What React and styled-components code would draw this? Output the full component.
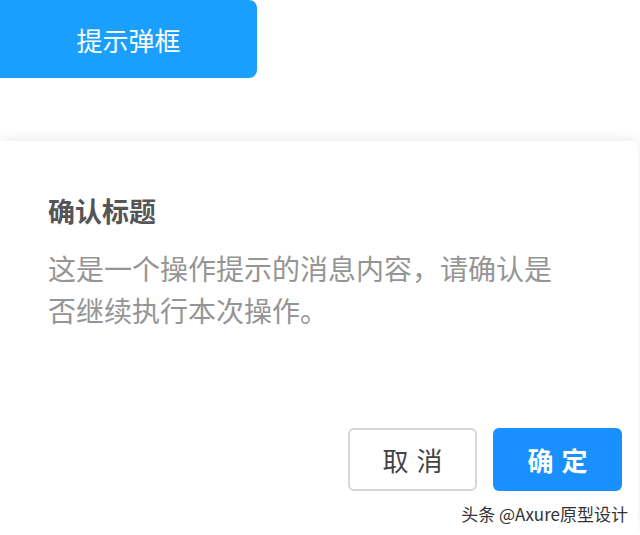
import React from "react";
import styled, { createGlobalStyle } from "styled-components";

const GlobalStyle = createGlobalStyle`
    html, body {
        margin: 0;
        padding: 0;
        background: #ffffff;
        font-family: "Noto Sans CJK SC", "Noto Sans", sans-serif;
    }
`;

const Page = styled.div`
    width: 640px;
    height: 535px;
    overflow: hidden;
    display: flex;
    flex-direction: column;
`;

const TriggerButton = styled.button`
    width: 257px;
    height: 78px;
    flex-shrink: 0;
    border: none;
    border-radius: 0 8px 8px 0;
    background: #1a9fff;
    color: #ffffff;
    font-family: inherit;
    font-size: 26px;
    padding: 0;
`;

const Dialog = styled.div`
    margin-top: 63px;
    width: 638px;
    flex: 1;
    background: #ffffff;
    border-radius: 0 8px 8px 0;
    box-shadow: 0 -3px 12px rgba(0, 0, 0, 0.07);
    padding: 50px 0 0 48px;
    box-sizing: border-box;
    display: flex;
    flex-direction: column;
`;

const Title = styled.h2`
    margin: 0;
    font-size: 27px;
    font-weight: bold;
    color: #555555;
    line-height: 40px;
`;

const Message = styled.p`
    margin: 16px 0 0;
    width: 520px;
    font-size: 28px;
    line-height: 42px;
    color: #959595;
`;

const Footer = styled.div`
    margin-top: auto;
    display: flex;
    flex-direction: column;
    align-items: flex-end;
    padding-right: 16px;
`;

const Actions = styled.div`
    display: flex;
    gap: 16px;
`;

const ActionButton = styled.button`
    width: 129px;
    height: 63px;
    box-sizing: border-box;
    border-radius: 6px;
    font-family: inherit;
    font-size: 26px;
    letter-spacing: 8px;
    text-indent: 8px;
    padding: 0;
    border: ${p => (p.$primary ? "none" : "2px solid #d6d6d6")};
    background: ${p => (p.$primary ? "#1890ff" : "#ffffff")};
    color: ${p => (p.$primary ? "#ffffff" : "#444444")};
    font-weight: ${p => (p.$primary ? "bold" : "normal")};
`;

const Watermark = styled.div`
    margin: 12px -6px 10px 0;
    font-size: 17px;
    color: #333333;
    line-height: 22px;
`;

const App = () => {
    return (
        <Page>
            <GlobalStyle />
            <TriggerButton>提示弹框</TriggerButton>
            <Dialog>
                <Title>确认标题</Title>
                <Message>这是一个操作提示的消息内容，请确认是否继续执行本次操作。</Message>
                <Footer>
                    <Actions>
                        <ActionButton>取消</ActionButton>
                        <ActionButton $primary>确定</ActionButton>
                    </Actions>
                    <Watermark>头条 @Axure原型设计</Watermark>
                </Footer>
            </Dialog>
        </Page>
    );
};

export default App;
